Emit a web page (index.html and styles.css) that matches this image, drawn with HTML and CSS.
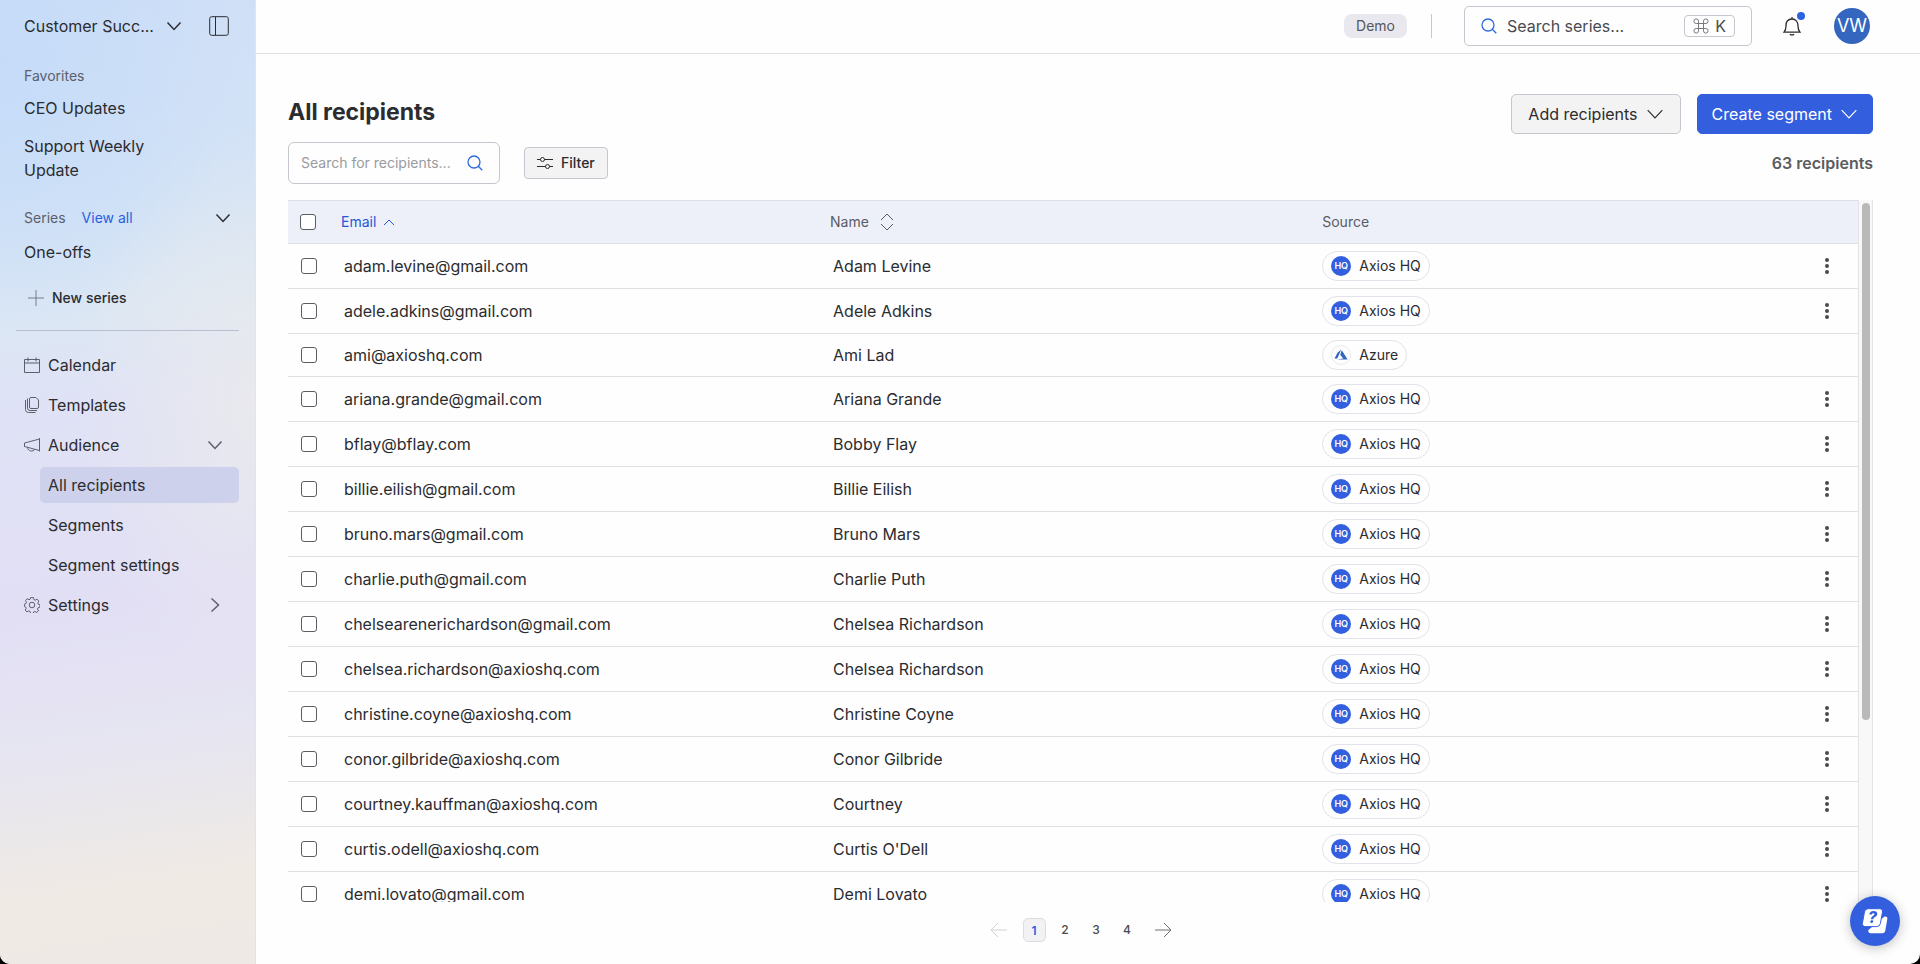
FILE: index.html
```html
<!DOCTYPE html>
<html lang="en">
<head>
    <meta charset="UTF-8">
    <meta name="viewport" content="width=device-width, initial-scale=1">
    <title>All recipients</title>
    <link rel="stylesheet" href="styles.css">
</head>
<body>
    <!-- Shared icons -->
    <svg class="sprite" aria-hidden="true">
        <symbol id="chevron-down" viewBox="0 0 16 16"><path d="M1.5 4.5 8 11.5l6.5-7"/></symbol>
        <symbol id="chevron-right" viewBox="0 0 16 16"><path d="M4.5 1.5 11.5 8l-7 6.5"/></symbol>
        <symbol id="search" viewBox="0 0 16 16"><circle cx="7" cy="7" r="6"/><path d="m11.3 11.3 4 4"/></symbol>
        <symbol id="dots" viewBox="0 0 4 16"><circle cx="2" cy="2" r="2"/><circle cx="2" cy="8" r="2"/><circle cx="2" cy="14" r="2"/></symbol>
        <symbol id="azure" viewBox="0 0 14 12"><path d="M7.3.5 3.6 3.7.4 9.4h2.9z"/><path d="M7.8 1.3 6.2 5.8l3 3.8-5.8 1h10.2z"/></symbol>
    </svg>
    <div class="app">
        <!-- Sidebar -->
        <aside class="sidebar">
            <div class="workspace">
                <button class="workspace-name"><span>Customer Succ...</span><svg class="icon chevron"><use href="#chevron-down"/></svg></button>
                <button class="collapse" aria-label="Collapse sidebar"><svg class="icon" width="20" height="20" viewBox="0 0 20 20"><rect x=".7" y=".7" width="18.6" height="18.6" rx="2"/><path d="M6.5.7v18.6"/></svg></button>
            </div>
            <p class="label">Favorites</p>
            <ul class="links">
                <li><a href="#">CEO Updates</a></li>
                <li><a href="#">Support Weekly Update</a></li>
            </ul>
            <div class="series-head">
                <span>Series</span>
                <a href="#">View all</a>
                <button aria-label="Toggle series"><svg class="icon chevron"><use href="#chevron-down"/></svg></button>
            </div>
            <ul class="links">
                <li><a href="#">One-offs</a></li>
            </ul>
            <button class="new-series"><svg class="icon" width="18" height="18" viewBox="0 0 18 18"><path d="M9 1v16M1 9h16"/></svg>New series</button>
            <nav class="menu">
                <a href="#"><svg class="icon" width="16" height="16" viewBox="0 0 16 16"><path d="M.5 2.5h15v13H.5zM.5 6h15M4 .5v4M12 .5v4"/></svg>Calendar</a>
                <a href="#"><svg class="icon" width="16" height="16" viewBox="0 0 16 16"><path d="M7 .5h5l2.500 2.500v7A1.500 1.500 0 0 1 13 11.500H7A1.500 1.500 0 0 1 5.500 10V2A1.500 1.500 0 0 1 7 .5zM3.500 1.500v9.500a2.500 2.500 0 0 0 2.500 2.500h7M1.500 3v9.500a3 3 0 0 0 3 3h7"/></svg>Templates</a>
                <a href="#"><svg class="icon" width="16" height="16" viewBox="0 0 16 16"><path d="M15.500 1v13.500M15.500 2 .5 6v3.500l15 4M.5 6v3.500M3.500 10.300c0 4 6 5 7 2"/></svg>Audience<svg class="icon chevron end"><use href="#chevron-down"/></svg></a>
                <a class="sub active" href="#">All recipients</a>
                <a class="sub" href="#">Segments</a>
                <a class="sub" href="#">Segment settings</a>
                <a href="#"><svg class="icon" width="16" height="16" viewBox="0 0 16 16"><circle cx="8" cy="8" r="2.800"/><path d="M6.600.6h2.800l.5 2 1.300.6 1.900-1 1.700 1.900-1 1.800.5 1.300 1.700.6v2.300l-1.900.6-.6 1.300 1 1.800-1.800 1.700-1.800-1-1.300.5-.5 1.500H6.600L6 14.400l-1.300-.5-1.800 1-1.700-1.800 1-1.800-.5-1.300-1.300-.5V7.100l1.600-.6.5-1.300-1-1.700 1.700-1.800 1.800 1L6.100 2.200z"/></svg>Settings<svg class="icon chevron end"><use href="#chevron-right"/></svg></a>
            </nav>
        </aside>

        <div class="page">
            <!-- Top bar -->
            <header class="topbar">
                <span class="badge">Demo</span>
                <span class="divider"></span>
                <button class="series-search">
                    <svg class="icon blue" width="16" height="16"><use href="#search"/></svg>
                    <span>Search series...</span>
                    <kbd><svg class="icon" width="16" height="16" viewBox="0 0 16 16"><path d="M5.500 5.500h5v5h-5zM5.500 5.500V3.200a2.300 2.300 0 1 0-2.300 2.300zM10.500 5.500h2.300a2.300 2.300 0 1 0-2.300-2.300zM10.500 10.500v2.300a2.300 2.300 0 1 0 2.300-2.300zM5.500 10.500H3.200a2.300 2.300 0 1 0 2.300 2.300z"/></svg>K</kbd>
                </button>
                <button class="bell" aria-label="Notifications"><svg class="icon" width="18" height="20" viewBox="0 0 18 20"><path d="M1 16.200h16c-1.500-1.500-2-3-2-6.200 0-4.500-2.300-7-6-7s-6 2.500-6 7c0 3.200-.5 4.700-2 6.200zM9 3V1M7 18c.4 1.300 3.600 1.300 4 0"/></svg></button>
                <button class="avatar">VW</button>
            </header>

            <main class="content">
                <div class="heading">
                    <h1>All recipients</h1>
                    <div class="actions">
                        <button class="button">Add recipients<svg class="icon"><use href="#chevron-down"/></svg></button>
                        <button class="button primary">Create segment<svg class="icon"><use href="#chevron-down"/></svg></button>
                    </div>
                </div>
                <div class="toolbar">
                    <label class="search">
                        <input type="text" placeholder="Search for recipients..." aria-label="Search for recipients">
                        <svg class="icon blue" width="16" height="16"><use href="#search"/></svg>
                    </label>
                    <button class="filter"><svg class="icon" width="16" height="14" viewBox="0 0 16 14"><path d="M0 3.500h3.500M7.500 3.500H16M0 10.500h8.500M12.500 10.500H16"/><circle cx="5.500" cy="3.500" r="2"/><circle cx="10.500" cy="10.500" r="2"/></svg>Filter</button>
                    <span class="count">63 recipients</span>
                </div>

                <!-- Recipients table -->
                <div class="table-area">
                    <div class="table-view">
                        <table>
                            <thead>
                                <tr>
                                    <th class="check"><input type="checkbox" aria-label="Select all"></th>
                                    <th class="email"><button class="sort sorted">Email<svg class="icon" width="12" height="7" viewBox="0 0 12 7"><path d="m1 6 5-5 5 5"/></svg></button></th>
                                    <th class="name"><button class="sort">Name<svg class="icon" width="14" height="18" viewBox="0 0 14 18"><path d="m1 7 6-6 6 6M1 11l6 6 6-6"/></svg></button></th>
                                    <th class="source">Source</th>
                                    <th class="more"></th>
                                </tr>
                            </thead>
                            <tbody>
                                <tr>
                                    <td><input type="checkbox" aria-label="Select Adam Levine"></td>
                                    <td>adam.levine@gmail.com</td>
                                    <td>Adam Levine</td>
                                    <td><span class="pill"><i class="hq">HQ</i>Axios HQ</span></td>
                                    <td><button class="row-menu" aria-label="More"><svg><use href="#dots"/></svg></button></td>
                                </tr>
                                <tr>
                                    <td><input type="checkbox" aria-label="Select Adele Adkins"></td>
                                    <td>adele.adkins@gmail.com</td>
                                    <td>Adele Adkins</td>
                                    <td><span class="pill"><i class="hq">HQ</i>Axios HQ</span></td>
                                    <td><button class="row-menu" aria-label="More"><svg><use href="#dots"/></svg></button></td>
                                </tr>
                                <tr>
                                    <td><input type="checkbox" aria-label="Select Ami Lad"></td>
                                    <td>ami@axioshq.com</td>
                                    <td>Ami Lad</td>
                                    <td><span class="pill"><i class="az"><svg><use href="#azure"/></svg></i>Azure</span></td>
                                    <td></td>
                                </tr>
                                <tr>
                                    <td><input type="checkbox" aria-label="Select Ariana Grande"></td>
                                    <td>ariana.grande@gmail.com</td>
                                    <td>Ariana Grande</td>
                                    <td><span class="pill"><i class="hq">HQ</i>Axios HQ</span></td>
                                    <td><button class="row-menu" aria-label="More"><svg><use href="#dots"/></svg></button></td>
                                </tr>
                                <tr>
                                    <td><input type="checkbox" aria-label="Select Bobby Flay"></td>
                                    <td>bflay@bflay.com</td>
                                    <td>Bobby Flay</td>
                                    <td><span class="pill"><i class="hq">HQ</i>Axios HQ</span></td>
                                    <td><button class="row-menu" aria-label="More"><svg><use href="#dots"/></svg></button></td>
                                </tr>
                                <tr>
                                    <td><input type="checkbox" aria-label="Select Billie Eilish"></td>
                                    <td>billie.eilish@gmail.com</td>
                                    <td>Billie Eilish</td>
                                    <td><span class="pill"><i class="hq">HQ</i>Axios HQ</span></td>
                                    <td><button class="row-menu" aria-label="More"><svg><use href="#dots"/></svg></button></td>
                                </tr>
                                <tr>
                                    <td><input type="checkbox" aria-label="Select Bruno Mars"></td>
                                    <td>bruno.mars@gmail.com</td>
                                    <td>Bruno Mars</td>
                                    <td><span class="pill"><i class="hq">HQ</i>Axios HQ</span></td>
                                    <td><button class="row-menu" aria-label="More"><svg><use href="#dots"/></svg></button></td>
                                </tr>
                                <tr>
                                    <td><input type="checkbox" aria-label="Select Charlie Puth"></td>
                                    <td>charlie.puth@gmail.com</td>
                                    <td>Charlie Puth</td>
                                    <td><span class="pill"><i class="hq">HQ</i>Axios HQ</span></td>
                                    <td><button class="row-menu" aria-label="More"><svg><use href="#dots"/></svg></button></td>
                                </tr>
                                <tr>
                                    <td><input type="checkbox" aria-label="Select Chelsea Richardson"></td>
                                    <td>chelsearenerichardson@gmail.com</td>
                                    <td>Chelsea Richardson</td>
                                    <td><span class="pill"><i class="hq">HQ</i>Axios HQ</span></td>
                                    <td><button class="row-menu" aria-label="More"><svg><use href="#dots"/></svg></button></td>
                                </tr>
                                <tr>
                                    <td><input type="checkbox" aria-label="Select Chelsea Richardson"></td>
                                    <td>chelsea.richardson@axioshq.com</td>
                                    <td>Chelsea Richardson</td>
                                    <td><span class="pill"><i class="hq">HQ</i>Axios HQ</span></td>
                                    <td><button class="row-menu" aria-label="More"><svg><use href="#dots"/></svg></button></td>
                                </tr>
                                <tr>
                                    <td><input type="checkbox" aria-label="Select Christine Coyne"></td>
                                    <td>christine.coyne@axioshq.com</td>
                                    <td>Christine Coyne</td>
                                    <td><span class="pill"><i class="hq">HQ</i>Axios HQ</span></td>
                                    <td><button class="row-menu" aria-label="More"><svg><use href="#dots"/></svg></button></td>
                                </tr>
                                <tr>
                                    <td><input type="checkbox" aria-label="Select Conor Gilbride"></td>
                                    <td>conor.gilbride@axioshq.com</td>
                                    <td>Conor Gilbride</td>
                                    <td><span class="pill"><i class="hq">HQ</i>Axios HQ</span></td>
                                    <td><button class="row-menu" aria-label="More"><svg><use href="#dots"/></svg></button></td>
                                </tr>
                                <tr>
                                    <td><input type="checkbox" aria-label="Select Courtney"></td>
                                    <td>courtney.kauffman@axioshq.com</td>
                                    <td>Courtney</td>
                                    <td><span class="pill"><i class="hq">HQ</i>Axios HQ</span></td>
                                    <td><button class="row-menu" aria-label="More"><svg><use href="#dots"/></svg></button></td>
                                </tr>
                                <tr>
                                    <td><input type="checkbox" aria-label="Select Curtis O'Dell"></td>
                                    <td>curtis.odell@axioshq.com</td>
                                    <td>Curtis O'Dell</td>
                                    <td><span class="pill"><i class="hq">HQ</i>Axios HQ</span></td>
                                    <td><button class="row-menu" aria-label="More"><svg><use href="#dots"/></svg></button></td>
                                </tr>
                                <tr>
                                    <td><input type="checkbox" aria-label="Select Demi Lovato"></td>
                                    <td>demi.lovato@gmail.com</td>
                                    <td>Demi Lovato</td>
                                    <td><span class="pill"><i class="hq">HQ</i>Axios HQ</span></td>
                                    <td><button class="row-menu" aria-label="More"><svg><use href="#dots"/></svg></button></td>
                                </tr>
                            </tbody>
                        </table>
                    </div>
                    <div class="track"><div class="thumb"></div></div>
                </div>

                <!-- Pagination -->
                <nav class="pagination" aria-label="Pages">
                    <button class="arrow" disabled aria-label="Previous page"><svg class="icon" width="18" height="16" viewBox="0 0 18 16"><path d="M17 8H1M8 1 1 8l7 7"/></svg></button>
                    <button class="current">1</button>
                    <button>2</button>
                    <button>3</button>
                    <button>4</button>
                    <button class="arrow" aria-label="Next page"><svg class="icon" width="18" height="16" viewBox="0 0 18 16"><path d="M1 8h16M10 1l7 7-7 7"/></svg></button>
                </nav>
            </main>
        </div>
    </div>
    <button class="help" aria-label="Help"><svg width="26" height="26" viewBox="0 0 26 26"><path class="card" d="M22.500 8.500h.6a2.200 2.200 0 0 1 2.200 2.600l-2 11.500a3.200 3.200 0 0 1-3.200 2.700H8.600A2.300 2.300 0 0 1 6.300 23l.1-.9"/><path class="front" d="M6.200.7h11.500a2.800 2.800 0 0 1 2.800 3.300l-2.100 11.500a3.800 3.800 0 0 1-3.700 3.100H3.200A2.800 2.800 0 0 1 .4 15.300L2.500 3.800A3.800 3.800 0 0 1 6.200.7z"/><text x="6" y="15">?</text></svg></button>
</body>
</html>
```
FILE: styles.css
```css
* {
    box-sizing: border-box;
}
body {
    margin: 0;
    background-color: black;
    font-family: Inter, "Liberation Sans", sans-serif;
    font-size: 16px;
    line-height: 24px;
    color: #2b2c30;
}
button, input {
    margin: 0;
    padding: 0;
    border: 0;
    background: none;
    font: inherit;
    color: inherit;
}
button {
    cursor: pointer;
}
a {
    color: inherit;
    text-decoration: none;
}
h1, p, ul {
    margin: 0;
    padding: 0;
    list-style: none;
}
.sprite {
    display: none;
}
.icon {
    flex: none;
    fill: none;
    stroke: currentColor;
    stroke-width: 1;
}
.chevron {
    width: 16px;
    height: 16px;
    stroke-width: 1.5;
}
.blue {
    color: #2f6be0;
    stroke-width: 1.3;
}
.app {
    display: flex;
    height: 100vh;
    overflow: hidden;
    background-color: #fefefe;
    border-radius: 0 0 10px 10px;
}

/* sidebar */
.sidebar {
    flex: none;
    width: 256px;
    border-right: 1px solid #e3e3ea;
    background:
        radial-gradient(ellipse 240px 280px at 0 60px, rgba(196, 219, 249, 0.9) 0%, rgba(196, 219, 249, 0) 100%),
        radial-gradient(ellipse 180px 280px at 100% 400px, rgba(235, 235, 236, 0.8) 0%, rgba(235, 235, 236, 0) 100%),
        linear-gradient(172deg, #cfdff7 0%, #d3e3f6 22%, #dce7f4 33%, #dfe2f6 41%, #e2dff5 62%, #e6e5f1 76%, #ebe8ea 84%, #f0eae4 91%, #efe9e6 100%);
}
.workspace {
    display: flex;
    align-items: center;
    justify-content: space-between;
    height: 52px;
    padding: 0 26px 0 24px;
}
.workspace-name {
    display: flex;
    align-items: center;
    gap: 12px;
}
.collapse {
    display: flex;
}
.label {
    padding: 12px 24px 4px;
    font-size: 14px;
    color: #5b5f6b;
}
.links a {
    display: block;
    padding: 4px 96px 10px 24px;
}
.series-head {
    display: flex;
    align-items: center;
    gap: 16px;
    padding: 14px 24px 6px;
    font-size: 14px;
    color: #5b5f6b;
}
.series-head a {
    color: #2c5fe0;
}
.series-head button {
    display: flex;
    margin-left: auto;
    color: #2b2c30;
}
.new-series {
    display: flex;
    align-items: center;
    gap: 7px;
    margin: 12px 0 20px 27px;
    font-size: 14px;
    font-weight: 500;
}
.new-series .icon {
    color: #777c88;
}
.menu {
    display: flex;
    flex-direction: column;
    gap: 4px;
    margin: 0 16px;
    padding-top: 16px;
    border-top: 1px solid #b9bdd2;
}
.menu a {
    display: flex;
    align-items: center;
    gap: 8px;
    height: 36px;
    padding: 0 16px 0 8px;
    border-radius: 5px;
}
.menu .icon {
    color: #5c606b;
}
.menu .end {
    margin-left: auto;
}
.menu .sub {
    margin-left: 24px;
}
.menu .active {
    background-color: #cdd1ec;
}

/* top bar */
.page {
    display: flex;
    flex: 1;
    flex-direction: column;
    min-width: 0;
}
.topbar {
    display: flex;
    flex: none;
    align-items: center;
    justify-content: flex-end;
    height: 54px;
    padding: 0 50px 2px 0;
    border-bottom: 1px solid #e0e0e4;
}
.badge {
    padding: 0 12px;
    border-radius: 8px;
    background-color: #e8e8ee;
    font-size: 14px;
    color: #55575f;
}
.divider {
    width: 1px;
    height: 24px;
    margin: 0 32px 0 24px;
    background-color: #c6c7ce;
}
.series-search {
    display: flex;
    align-items: center;
    gap: 10px;
    width: 288px;
    height: 40px;
    padding: 0 16px;
    border: 1px solid #c6c7ce;
    border-radius: 5px;
    color: #4a4b50;
}
kbd {
    display: flex;
    align-items: center;
    gap: 6px;
    height: 22px;
    margin-left: auto;
    padding: 0 8px;
    border: 1px solid #c6c7ce;
    border-radius: 4px;
    font-family: inherit;
}
kbd .icon {
    color: #77787d;
}
.bell {
    position: relative;
    display: flex;
    margin: 0 33px 0 31px;
}
.bell::after {
    content: "";
    position: absolute;
    top: -4px;
    right: -4px;
    width: 8px;
    height: 8px;
    border-radius: 50%;
    background-color: #2f62e0;
}
.bell .icon {
    stroke-width: 1.3;
}
.avatar {
    width: 36px;
    height: 36px;
    border-radius: 50%;
    background-color: #3466bf;
    font-size: 18px;
    color: white;
}

/* page content */
.content {
    display: flex;
    flex: 1;
    flex-direction: column;
    min-height: 0;
    padding: 40px 47px 22px 32px;
}
.heading, .toolbar {
    display: flex;
    flex: none;
    align-items: center;
}
.heading {
    justify-content: space-between;
    height: 40px;
}
h1 {
    padding-bottom: 4px;
    font-size: 23px;
    font-weight: 700;
}
.actions {
    display: flex;
    gap: 16px;
}
.button {
    display: flex;
    align-items: center;
    gap: 8px;
    height: 40px;
    padding: 0 16px;
    border: 1px solid #c6c7ce;
    border-radius: 5px;
    background-color: #f3f3f3;
}
.button .icon {
    width: 18px;
    height: 18px;
}
.primary {
    padding: 0 14px;
    border-color: #335fdf;
    background-color: #335fdf;
    color: white;
}
.toolbar {
    height: 42px;
    margin: 8px 0 16px;
}
.search {
    display: flex;
    align-items: center;
    width: 212px;
    height: 42px;
    padding: 0 16px 0 12px;
    border: 1px solid #c6c7ce;
    border-radius: 6px;
}
.search input {
    flex: 1;
    min-width: 0;
    outline: none;
    font-size: 14px;
}
.search input::placeholder {
    color: #9a9b9f;
}
.filter {
    display: flex;
    align-items: center;
    gap: 8px;
    height: 32px;
    margin-left: 24px;
    padding: 0 12px;
    border: 1px solid #c6c7ce;
    border-radius: 4px;
    background-color: #f3f3f3;
    font-size: 14px;
    font-weight: 500;
}
.count {
    margin-left: auto;
    font-weight: 600;
    color: #5a5b5e;
}

/* table */
.table-area {
    display: flex;
    flex: 1;
    min-height: 0;
}
.table-view {
    flex: 1;
    overflow: hidden;
}
table {
    width: 100%;
    border-spacing: 0;
    table-layout: fixed;
}
th {
    height: 44px;
    padding: 0;
    border-top: 1px solid #dfe0e5;
    border-bottom: 1px solid #dfe0e5;
    background-color: #edf0f9;
    font-size: 14px;
    font-weight: 400;
    text-align: left;
    color: #5a5c63;
}
th.check {
    width: 53px;
    padding-left: 12px;
}
th.email {
    width: 31.15%;
}
th.name {
    width: 31.35%;
}
th.more {
    width: 64px;
}
td {
    padding: 6px 0 6px 3px;
    border-bottom: 1px solid #dfe0e5;
}
td:first-child {
    padding-left: 13px;
}
td:nth-child(4) {
    padding-left: 0;
}
input[type="checkbox"] {
    appearance: none;
    display: block;
    width: 16px;
    height: 16px;
    border: 1px solid #5c5d63;
    border-radius: 3px;
    background-color: white;
}
.sort {
    display: flex;
    align-items: center;
    gap: 11px;
}
.sorted {
    gap: 7px;
    color: #2556d8;
}
.pill {
    display: flex;
    align-items: center;
    gap: 8px;
    width: fit-content;
    height: 30px;
    padding: 0 8px;
    border: 1px solid #e2e3ea;
    border-radius: 15px;
    font-size: 14px;
}
.pill i {
    display: flex;
    align-items: center;
    justify-content: center;
    width: 20px;
    height: 20px;
    border-radius: 50%;
    font-size: 9px;
    font-style: normal;
    font-weight: 600;
    color: white;
}
.hq {
    background-color: #315fe0;
}
.az {
    border: 1px solid #e6eaf2;
}
.az svg {
    width: 14px;
    height: 12px;
    fill: #2f66be;
}
.row-menu {
    display: flex;
    align-items: center;
    justify-content: center;
    width: 60px;
    height: 32px;
}
.row-menu svg {
    width: 4px;
    height: 16px;
    fill: #4a4b4f;
}
.track {
    width: 15px;
    padding: 3px 2px 0 3px;
    border: 1px solid #e4e4e6;
    border-width: 0 1px;
    background-color: #f8f8f9;
}
.thumb {
    height: 74%;
    border-radius: 4px;
    background-color: #b9b9b9;
}

/* pagination */
.pagination {
    display: flex;
    flex: none;
    align-items: center;
    justify-content: center;
    gap: 8px;
    height: 24px;
    margin-top: 16px;
    font-size: 12px;
    font-weight: 500;
    color: #4a4b4f;
}
.pagination button {
    width: 23px;
    height: 24px;
    border-radius: 5px;
}
.pagination .current {
    border: 1px solid #dcdce2;
    background-color: #f2f2f4;
    font-weight: 600;
    color: #2c5fe0;
}
.pagination .arrow {
    display: flex;
    align-items: center;
    justify-content: center;
    width: 32px;
    color: #6f7074;
}
.pagination .arrow:disabled {
    color: #d2d2d4;
}

/* help button floats over the page */
.help {
    position: fixed;
    right: 20px;
    bottom: 18px;
    display: flex;
    align-items: center;
    justify-content: center;
    width: 50px;
    height: 50px;
    border-radius: 50%;
    background-color: #335fdf;
    box-shadow: 0 2px 12px rgba(0, 0, 0, 0.25);
}
.help .front, .help .card {
    fill: white;
}
.help .front {
    stroke: #335fdf;
    stroke-width: 1;
}
.help text {
    fill: #335fdf;
    font-size: 16px;
    font-style: italic;
    font-weight: 800;
}
```
